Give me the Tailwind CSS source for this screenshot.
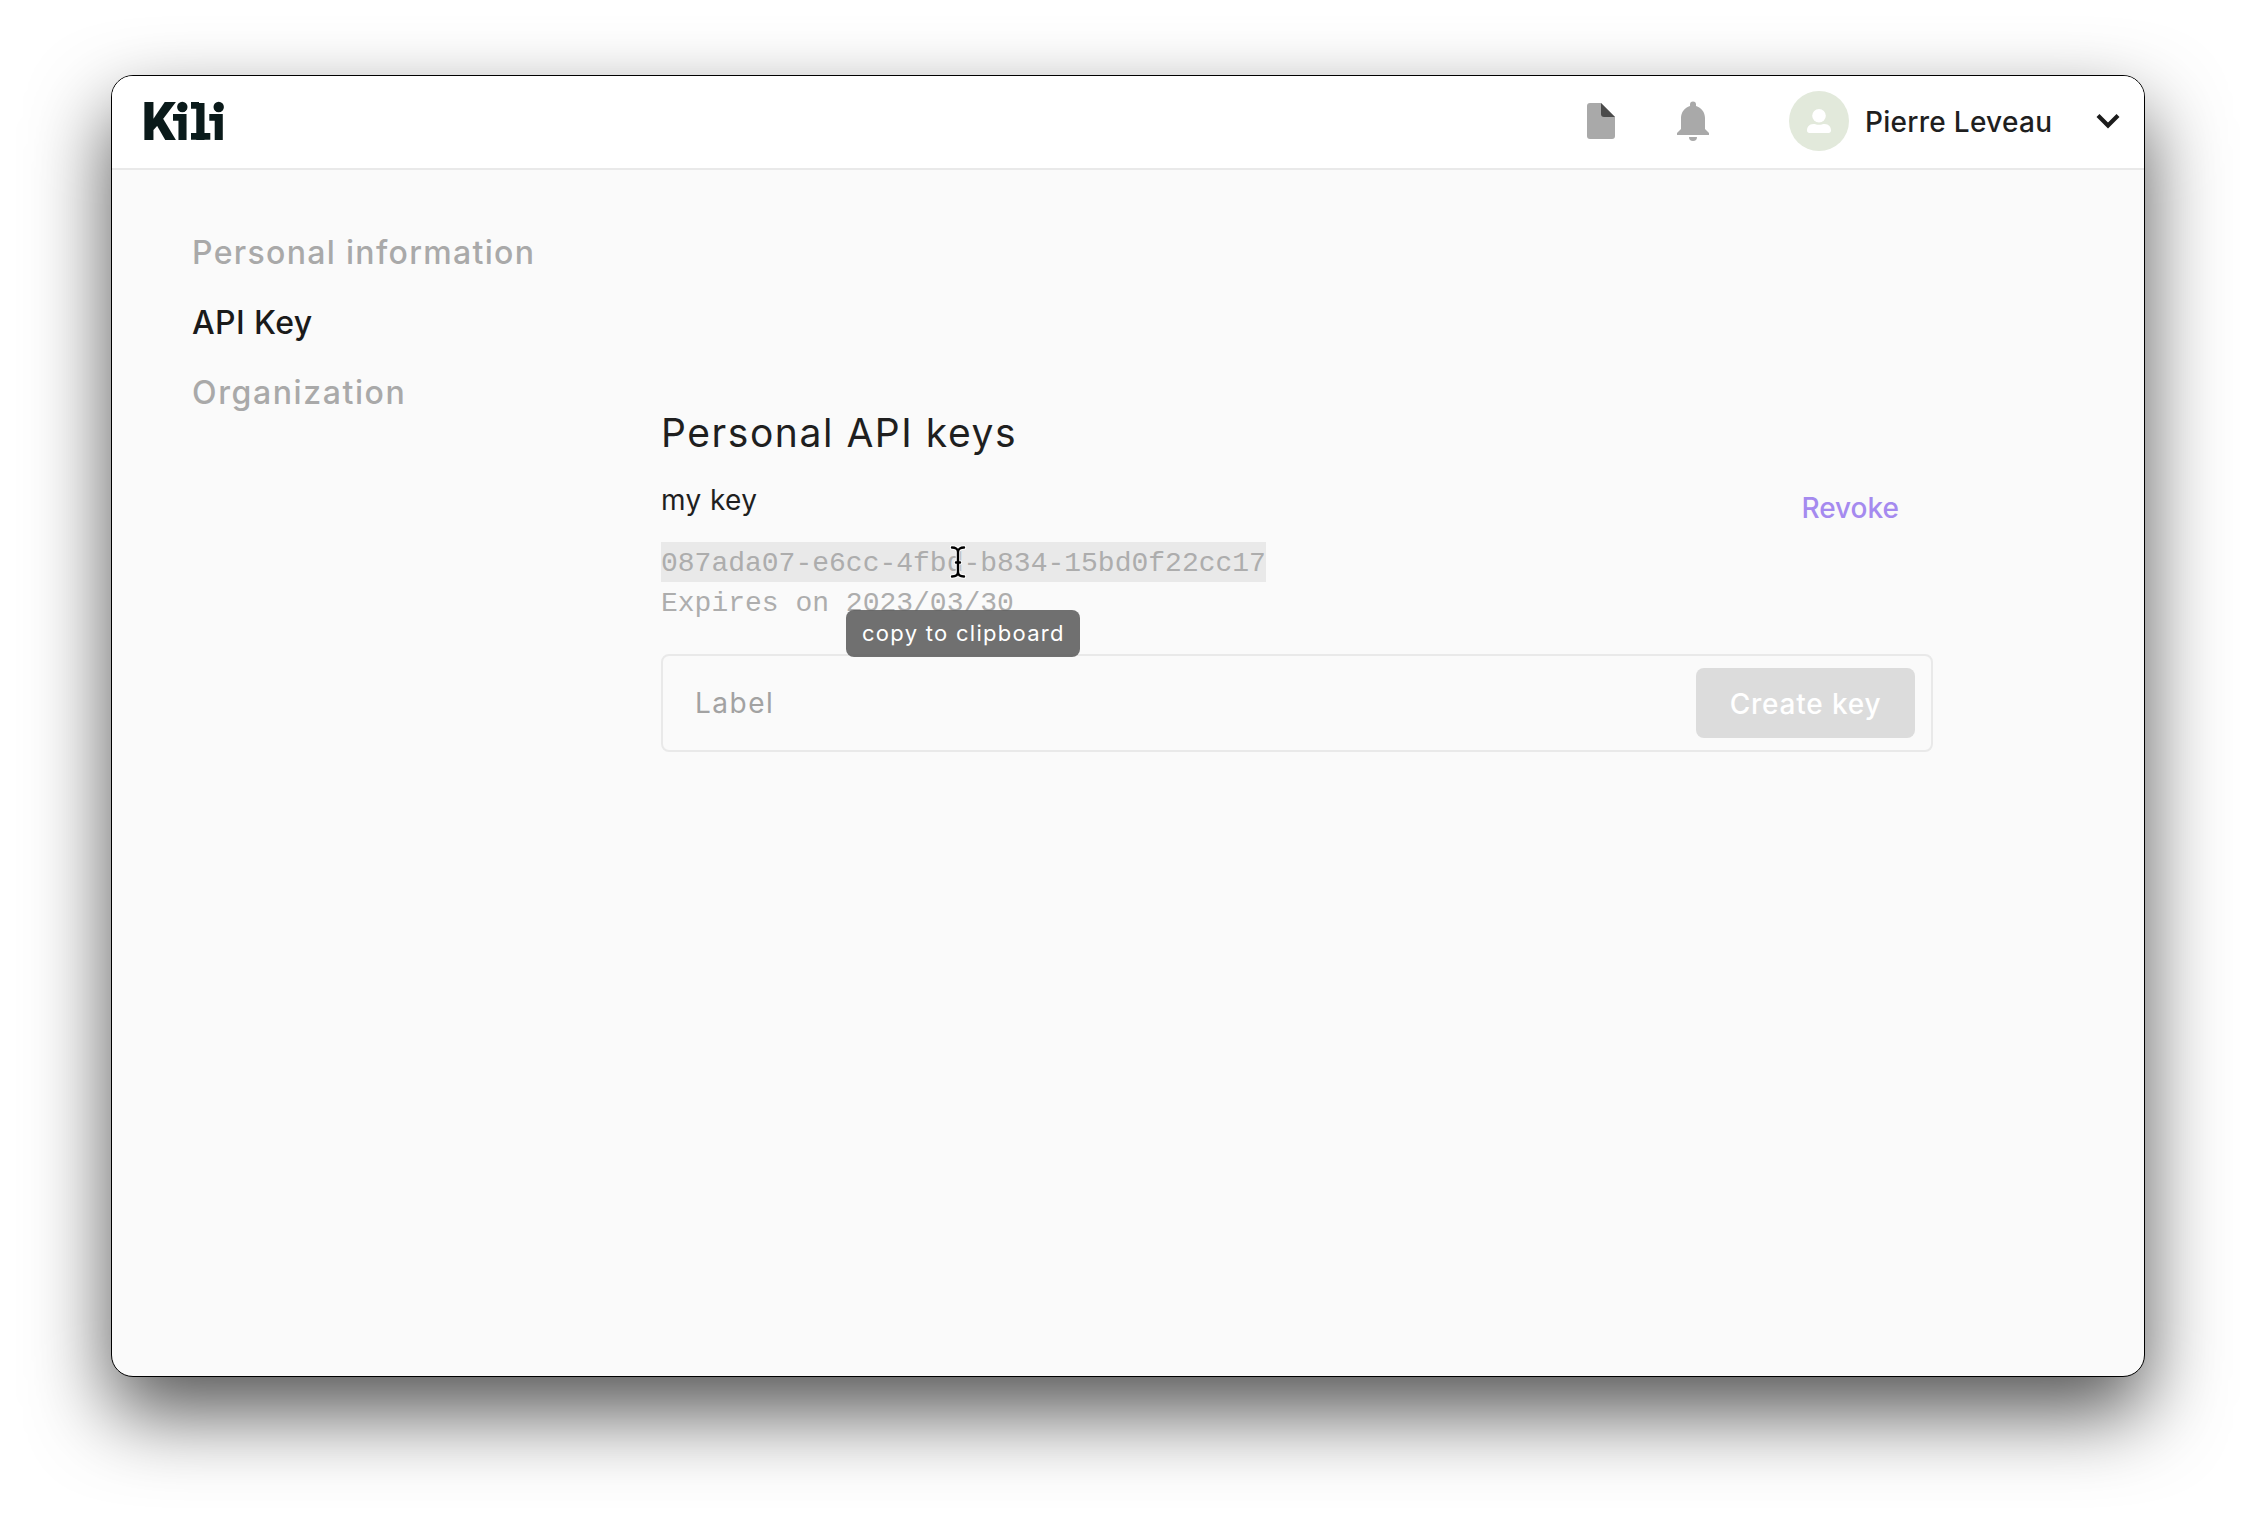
<!DOCTYPE html>
<html lang="en">
<head>
<meta charset="utf-8">
<title>Kili - API Key</title>
<script src="https://cdn.jsdelivr.net/npm/@tailwindcss/browser@4"></script>
</head>
<body class="h-[1524px] overflow-hidden bg-white pt-[75px] pl-[111px] font-['Inter',sans-serif] text-[28px] text-[#1f1f1f]">
<div class="h-[1302px] w-[2034px] rounded-[22px] border border-black bg-[#fafafa] shadow-[0_36px_80px_rgba(0,0,0,0.67)]">
  <header class="flex h-[94px] items-center rounded-t-[21px] border-b-2 border-[#e9e9e9] bg-white pr-[23px] pb-0.5 pl-8">
    <!-- Wordmark: sans letters with added slabs and dots -->
    <svg class="h-10 w-20 overflow-visible" viewBox="144 101 80 40" fill="#0a1a1a" font-family="Roboto, sans-serif" font-weight="900">
      <text x="141.5" y="139.7" font-size="53">K</text>
      <text x="175.7" y="139.7" font-size="49">i</text>
      <text x="193.6" y="139.7" font-size="50">l</text>
      <text x="212" y="139.7" font-size="49">i</text>
      <path d="M173 114h7v6.7h-7zM191 102h8v6.7h-8zM191 133h19.3v6.7H191zM209.3 114h7v6.7h-7z"/>
      <circle cx="182.300" cy="107" r="5.200"/>
      <circle cx="218.700" cy="107" r="5.200"/>
    </svg>
    <div class="ml-auto flex items-center">
      <svg class="h-9 w-7" viewBox="0 0 28 36">
        <path d="M3 0h11l14 14v19a3 3 0 0 1-3 3H3a3 3 0 0 1-3-3V3a3 3 0 0 1 3-3z" fill="#a9a9a9"/>
        <path d="M14 0l14 14H17a3 3 0 0 1-3-3z" fill="#4a4a4a"/>
      </svg>
      <svg class="ml-[62px] h-10 w-8" viewBox="0 0 32 40" fill="#a9a9a9">
        <path d="M13 5V3.600a3 3 0 0 1 6 0V5c5.300 1.500 9 6.200 9 12v11l4 4v2H0v-2l4-4V17c0-5.800 3.700-10.500 9-12z"/>
        <path d="M12 36h8a4 4 0 0 1-8 0z"/>
      </svg>
      <span class="ml-20 flex size-[60px] items-center justify-center rounded-full bg-[#e2e9db]">
        <svg class="h-6 w-6" viewBox="0 0 24 24" fill="#fff">
          <circle cx="12" cy="6.800" r="6.800"/>
          <path d="M6.500 15c2 0 3.300.8 5.500.8s3.500-.8 5.500-.8c4.500 0 6.500 3 6.500 6.500 0 1.600-.9 2.500-2.400 2.500H2.400C.9 24 0 23.100 0 21.500 0 18 2 15 6.500 15z"/>
        </svg>
      </span>
      <span class="ml-4 w-[230px] pt-0.5 font-medium tracking-[0.28px]">Pierre Leveau</span>
      <svg class="h-4 w-[26px]" viewBox="0 0 26 16" fill="none" stroke="#1c1c1c" stroke-width="4.200"><path d="M3 2.500l10 10 10-10"/></svg>
    </div>
  </header>
  <div class="flex">
    <nav class="flex w-[549px] flex-col pt-[48px] pl-20 text-[32px] leading-[70px] font-medium text-[#a9a9a9]">
      <a class="tracking-[1.32px]">Personal information</a>
      <a class="tracking-[0.4px] text-[#1a1a1a]">API Key</a>
      <a class="tracking-[1.6px]">Organization</a>
    </nav>
    <main class="w-[1272px] pt-[239px]">
      <h1 class="text-[39px] leading-[48px] tracking-[1.55px]">Personal API keys</h1>
      <section class="relative mt-[23px] flex justify-between">
        <div>
          <div class="leading-[41px] tracking-[0.4px]">my key</div>
          <div class="mt-[21px] font-['Liberation_Mono',monospace] leading-[44px] text-[#adadad]">
            <div class="h-10 w-[605px] bg-[#e9e9e9]">087ada07-e6cc-4fbd-b834-15bd0f22cc17</div>
            <div class="h-10">Expires on 2023/03/30</div>
          </div>
        </div>
        <a class="mt-[7px] pr-[34px] leading-[42px] font-medium text-[#a58aef]">Revoke</a>
        <svg class="absolute top-[65px] left-[288px] h-[34px] w-[18px]" viewBox="0 0 18 34" fill="none" stroke-linecap="round">
          <path d="M3 2.500c3.500 0 6 1.500 6 4.500v20c0 3-2.500 4.500-6 4.500M15 2.500c-3.500 0-6 1.500-6 4.500v20c0 3 2.500 4.500 6 4.500M7 17.500h4" stroke="#fff" stroke-width="4.500"/>
          <path d="M3 2.500c3.500 0 6 1.500 6 4.500v20c0 3-2.500 4.500-6 4.500M15 2.500c-3.500 0-6 1.500-6 4.500v20c0 3 2.500 4.500 6 4.500M7 17.500h4" stroke="#000" stroke-width="2.400"/>
        </svg>
        <div class="absolute top-[130px] left-[185px] flex h-[47px] w-[234px] items-center rounded-lg bg-[#616161]/90 pl-4 text-[22px] tracking-[1.28px] text-white">copy to clipboard</div>
      </section>
      <form class="mt-8 flex h-[98px] items-center justify-between rounded-lg border-2 border-[#e9e9e9] pr-4 pl-8">
        <span class="pb-px tracking-[1.5px] text-[#a2a2a2]">Label</span>
        <button type="button" class="h-[70px] w-[219px] rounded-lg bg-[#dcdcdc] pt-0.5 font-medium tracking-[0.8px] text-white">Create key</button>
      </form>
    </main>
  </div>
</div>
</body>
</html>
